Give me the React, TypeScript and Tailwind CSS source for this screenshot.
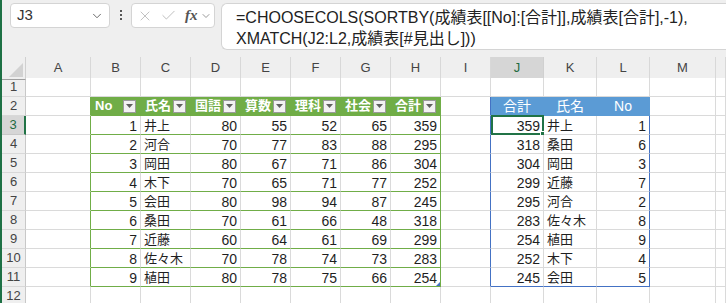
import { Check, ChevronDown, X } from 'lucide-react';

type Row1 = [number, string, number, number, number, number, number];
type Row2 = [number, string, number];

const COLS = ['A', 'B', 'C', 'D', 'E', 'F', 'G', 'H', 'I', 'J', 'K', 'L', 'M', ''];
const GRID =
    'grid grid-cols-[24px_65px_50px_50px_50px_50px_50px_50px_50px_50px_53px_53px_53px_66px_1fr]';

const SCORES: Row1[] = [
    [1, '井上', 80, 55, 52, 65, 359],
    [2, '河合', 70, 77, 83, 88, 295],
    [3, '岡田', 80, 67, 71, 86, 304],
    [4, '木下', 70, 65, 71, 77, 252],
    [5, '会田', 80, 98, 94, 87, 245],
    [6, '桑田', 70, 61, 66, 48, 318],
    [7, '近藤', 60, 64, 61, 69, 299],
    [8, '佐々木', 70, 78, 74, 73, 283],
    [9, '植田', 80, 78, 75, 66, 254],
];

const SORTED: Row2[] = [
    [359, '井上', 1],
    [318, '桑田', 6],
    [304, '岡田', 3],
    [299, '近藤', 7],
    [295, '河合', 2],
    [283, '佐々木', 8],
    [254, '植田', 9],
    [252, '木下', 4],
    [245, '会田', 5],
];

const HEAD1 = ['No', '氏名', '国語', '算数', '理科', '社会', '合計'];
const HEAD2 = ['合計', '氏名', 'No'];

const FilterButton = () => (
    <span className="mr-[1px] flex h-[13px] w-[13px] shrink-0 items-center justify-center border border-[#9a9a9a] bg-[#f2f2f2]">
        <svg width="7" height="4" viewBox="0 0 7 4">
            <path d="M0 0h7L3.5 4z" fill="#5f5f5f" />
        </svg>
    </span>
);

function renderCell(r: number, ci: number) {
    const c = COLS[ci];
    const inT1 = r >= 2 && r <= 11;
    const t1Col = ci >= 1 && ci <= 7; // B..H
    const t2Col = ci >= 9 && ci <= 11; // J..L

    let right = 'border-r-[#dadada]';
    let bottom = 'border-b-[#dadada]';
    let bg = 'bg-white';
    let content: React.ReactNode = null;
    let extra: React.ReactNode = null;

    if (inT1 && (c === 'A' || c === 'H')) right = 'border-r-[#70ad47]';
    if (inT1 && t1Col) bottom = 'border-b-[#70ad47]';
    if (inT1 && (c === 'I' || c === 'L')) right = 'border-r-[#4472c4]';
    if (r === 11 && t2Col) bottom = 'border-b-[#4472c4]';

    if (r === 2 && t1Col) {
        bg = 'bg-[#70ad47]';
        right = 'border-r-[#70ad47]';
        bottom = 'border-b-[#70ad47]';
        content = (
            <div className="flex h-full items-center justify-between pr-[3px] pl-[4px] text-[13px] font-bold text-white">
                <span>{HEAD1[ci - 1]}</span>
                <FilterButton />
            </div>
        );
    }
    if (r === 2 && t2Col) {
        bg = 'bg-[#5b9bd5]';
        right = 'border-r-[#5b9bd5]';
        bottom = 'border-b-[#5b9bd5]';
        content = (
            <div className="flex h-full items-center justify-center text-white">{HEAD2[ci - 9]}</div>
        );
    }

    if (r >= 3 && r <= 11 && t1Col) {
        const v = SCORES[r - 3][ci - 1];
        content =
            typeof v === 'number' ? (
                <div className="pt-[1px] pr-[3px] text-right">{v}</div>
            ) : (
                <div className="pt-[1px] pl-[3px] text-[13px]">{v}</div>
            );
        if (r === 11 && c === 'H') {
            extra = (
                <svg className="absolute right-0 bottom-0" width="4" height="4" viewBox="0 0 4 4">
                    <path d="M4 0v4H0z" fill="#4472c4" />
                </svg>
            );
        }
    }

    if (r >= 3 && r <= 11 && t2Col) {
        const v = SORTED[r - 3][ci - 9];
        content =
            typeof v === 'number' ? (
                <div className="pt-[1px] pr-[3px] text-right">{v}</div>
            ) : (
                <div className="pt-[1px] pl-[3px] text-[13px]">{v}</div>
            );
        if (r === 3 && c === 'J') {
            extra = (
                <div className="absolute -top-[1px] -right-[1px] -bottom-[1px] left-0 border-2 border-[#217346]">
                    <span className="absolute -right-[4px] -bottom-[4px] h-[6px] w-[6px] border border-white bg-[#217346]" />
                </div>
            );
        }
    }

    return (
        <div
            key={ci}
            className={`relative h-[19px] border-r border-b leading-[18px] ${right} ${bottom} ${bg}`}
        >
            {content}
            {extra}
        </div>
    );
}

export default function App() {
    const rows = Array.from({ length: 12 }, (_, i) => i + 1);

    return (
        <div className="h-[303px] w-[726px] overflow-hidden border-l-2 border-[#1e7145] bg-white font-['Liberation_Sans','Noto_Sans_CJK_JP',sans-serif] text-[14px] text-[#1f1f1f]">
            {/* formula bar */}
            <div className="flex h-[57px] items-start bg-[#efefef] pt-[3px]">
                <div className="ml-[8px] flex h-[25px] w-[100px] items-center justify-between rounded-[4px] border border-[#d4d4d4] bg-white pr-[5px] pl-[6px] text-[15px] text-[#333]">
                    <span>J3</span>
                    <ChevronDown size={14} strokeWidth={1.5} color="#555" />
                </div>
                <div className="mt-[7px] ml-[10px] flex flex-col gap-[2px]">
                    <span className="h-[2px] w-[2px] bg-[#555]" />
                    <span className="h-[2px] w-[2px] bg-[#555]" />
                    <span className="h-[2px] w-[2px] bg-[#555]" />
                </div>
                <div className="ml-[9px] flex h-[25px] w-[84px] items-center rounded-[4px] border border-[#d4d4d4] bg-white pl-[5px]">
                    <X size={16} strokeWidth={1.2} color="#b3b3b3" />
                    <Check size={17} strokeWidth={1.2} color="#b3b3b3" className="ml-[7px]" />
                    <span className="ml-[8px] font-['Liberation_Serif',serif] text-[15px] font-bold text-[#555] italic">
                        fx
                    </span>
                    <ChevronDown size={12} strokeWidth={1.5} color="#777" className="ml-[2px]" />
                </div>
                <div className="ml-[6px] h-[47px] flex-1 rounded-l-[6px] border border-r-0 border-[#d4d4d4] bg-white pt-[3px] pl-[14px] text-[16px] leading-[21px] text-[#222]">
                    <div>=CHOOSECOLS(SORTBY(成績表[[No]:[合計]],成績表[合計],-1),</div>
                    <div>XMATCH(J2:L2,成績表[#見出し]))</div>
                </div>
            </div>

            {/* column headers */}
            <div className={`${GRID} h-[21px] bg-[#efefef] text-[13px] text-[#444]`}>
                <div className="relative border-r border-b border-r-[#d0d0d0] border-b-[#9f9f9f]">
                    <svg className="absolute right-[2px] bottom-[2px]" width="14" height="14" viewBox="0 0 14 14">
                        <path d="M14 0v14H0z" fill="#d2d2d2" />
                    </svg>
                </div>
                {COLS.map((c, ci) =>
                    c === 'J' ? (
                        <div
                            key={ci}
                            className="flex items-center justify-center border-r border-b-2 border-r-[#d0d0d0] border-b-[#217346] bg-[#d6d6d6] pt-[1px] text-[#1e6b41]"
                        >
                            {c}
                        </div>
                    ) : (
                        <div
                            key={ci}
                            className="flex items-center justify-center border-r border-b border-r-[#d8d8d8] border-b-[#9f9f9f]"
                        >
                            {c}
                        </div>
                    ),
                )}
            </div>

            {/* rows */}
            {rows.map((r) => (
                <div key={r} className={GRID}>
                    {r === 3 ? (
                        <div className="flex h-[19px] items-center justify-center border-r-2 border-b border-r-[#217346] border-b-[#c8c8c8] bg-[#d6d6d6] text-[13px] text-[#1e6b41]">
                            {r}
                        </div>
                    ) : (
                        <div className="flex h-[19px] items-center justify-center border-r border-b border-r-[#c8c8c8] border-b-[#d8d8d8] bg-[#efefef] text-[13px] text-[#444]">
                            {r}
                        </div>
                    )}
                    {COLS.map((_, ci) => renderCell(r, ci))}
                </div>
            ))}
        </div>
    );
}
